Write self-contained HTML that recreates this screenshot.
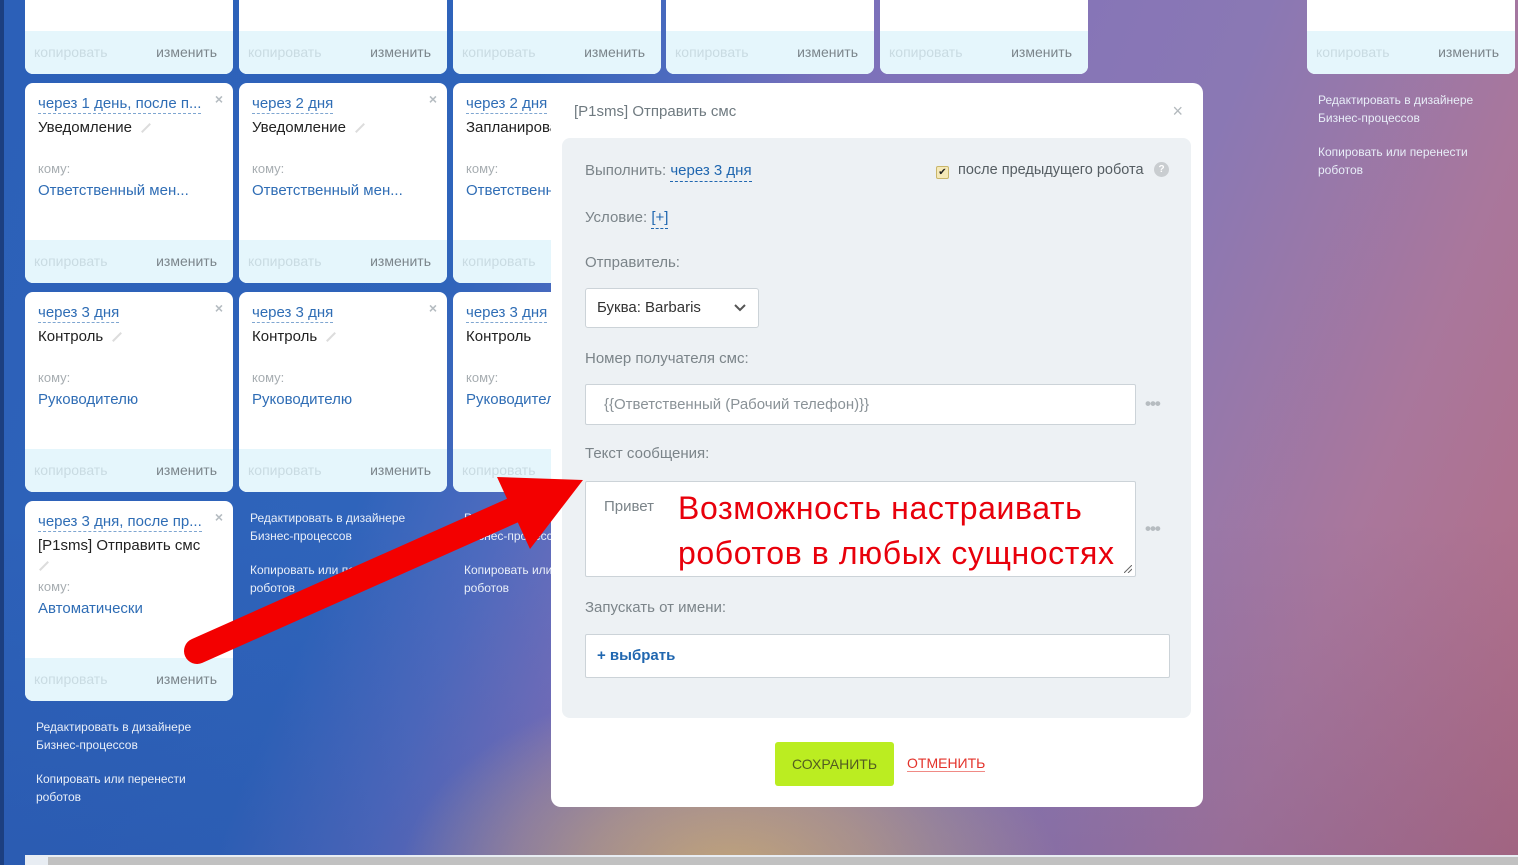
<!DOCTYPE html>
<html><head><meta charset="utf-8">
<style>
*{box-sizing:border-box;margin:0;padding:0}
body{width:1518px;height:865px;overflow:hidden;position:relative;font-family:"Liberation Sans",sans-serif;
background:
radial-gradient(ellipse 330px 200px at 730px 880px, rgba(218,182,120,1) 0%, rgba(218,182,120,0.6) 45%, rgba(218,182,120,0) 100%),
linear-gradient(112deg,#2c60b8 0%,#2f64bb 30%,#4f6bbf 38%,#7a70ba 46%,#8574b8 55%,#8a78b4 68%,#a9779c 84%,#b46c82 100%);}
.lay{position:absolute;inset:0;background:linear-gradient(180deg,rgba(0,0,0,0) 0%,rgba(0,0,0,0) 60%,rgba(20,40,120,0.12) 100%);}
.card{position:absolute;width:208px;background:#fff;border-radius:8px;overflow:hidden}
.card .ft{position:absolute;left:0;right:0;bottom:0;height:43px;background:#e5f6fc;font-size:14px}
.ft .c{position:absolute;left:9px;top:13px;color:#c9dbe2}
.ft .e{position:absolute;right:16px;top:13px;color:#7b858b}
.t{position:absolute;left:13px;top:12px;font-size:15px;color:#2f6db5;border-bottom:1px dashed #7fa6d1;line-height:18px;white-space:nowrap}
.x{position:absolute;right:10px;top:8px;color:#b5bcc1;font-size:14px;font-weight:bold}
.n{position:absolute;left:13px;top:36px;font-size:15px;color:#222;white-space:nowrap}
.n i{display:inline-block;width:12px;height:2px;background:#dcdcdc;transform:rotate(-45deg);margin-left:8px;vertical-align:middle}
.k{position:absolute;left:13px;top:78px;font-size:13px;color:#a7adb1}
.r{position:absolute;left:13px;top:99px;font-size:15px;color:#2f6db5;white-space:nowrap}
.lnk{position:absolute;font-size:12px;color:#e8eef8;line-height:18px}
.modal{position:absolute;left:551px;top:83px;width:652px;height:724px;background:#fff;border-radius:10px}
.panel{position:absolute;left:11px;top:55px;width:629px;height:580px;background:#edf1f4;border-radius:8px}
.lbl{position:absolute;font-family:"Liberation Sans Narrow","Liberation Sans",sans-serif;font-size:15px;color:#7b8489}
.inp{position:absolute;background:#fff;border:1px solid #ccd3d8;border-radius:2px}
.dots{position:absolute;color:#b6bcc0;font-size:14px;letter-spacing:-1px;font-weight:bold}
</style></head><body>
<div class="lay"></div>
<div style="position:absolute;left:0;top:0;width:4px;height:865px;background:#1c3f80"></div>

<div class="card" style="left:25px;top:-10px;height:84px"><div class="ft"><span class="c">копировать</span><span class="e">изменить</span></div></div>
<div class="card" style="left:239px;top:-10px;height:84px"><div class="ft"><span class="c">копировать</span><span class="e">изменить</span></div></div>
<div class="card" style="left:453px;top:-10px;height:84px"><div class="ft"><span class="c">копировать</span><span class="e">изменить</span></div></div>
<div class="card" style="left:666px;top:-10px;height:84px"><div class="ft"><span class="c">копировать</span><span class="e">изменить</span></div></div>
<div class="card" style="left:880px;top:-10px;height:84px"><div class="ft"><span class="c">копировать</span><span class="e">изменить</span></div></div>
<div class="card" style="left:1307px;top:-10px;height:84px"><div class="ft"><span class="c">копировать</span><span class="e">изменить</span></div></div>

<div class="card" style="left:25px;top:83px;height:200px"><span class="t">через 1 день, после п...</span><span class="x">×</span><span class="n">Уведомление<i></i></span><span class="k">кому:</span><span class="r">Ответственный мен...</span><div class="ft"><span class="c">копировать</span><span class="e">изменить</span></div></div>
<div class="card" style="left:239px;top:83px;height:200px"><span class="t">через 2 дня</span><span class="x">×</span><span class="n">Уведомление<i></i></span><span class="k">кому:</span><span class="r">Ответственный мен...</span><div class="ft"><span class="c">копировать</span><span class="e">изменить</span></div></div>
<div class="card" style="left:453px;top:83px;height:200px"><span class="t">через 2 дня</span><span class="n">Запланировать</span><span class="k">кому:</span><span class="r">Ответственный</span><div class="ft"><span class="c">копировать</span><span class="e">изменить</span></div></div>

<div class="card" style="left:25px;top:292px;height:200px"><span class="t">через 3 дня</span><span class="x">×</span><span class="n">Контроль<i></i></span><span class="k">кому:</span><span class="r">Руководителю</span><div class="ft"><span class="c">копировать</span><span class="e">изменить</span></div></div>
<div class="card" style="left:239px;top:292px;height:200px"><span class="t">через 3 дня</span><span class="x">×</span><span class="n">Контроль<i></i></span><span class="k">кому:</span><span class="r">Руководителю</span><div class="ft"><span class="c">копировать</span><span class="e">изменить</span></div></div>
<div class="card" style="left:453px;top:292px;height:200px"><span class="t">через 3 дня</span><span class="n">Контроль</span><span class="k">кому:</span><span class="r">Руководителю</span><div class="ft"><span class="c">копировать</span><span class="e">изменить</span></div></div>

<div class="card" style="left:25px;top:501px;height:200px"><span class="t">через 3 дня, после пр...</span><span class="x">×</span><span class="n">[P1sms] Отправить смс</span><span class="n" style="top:56px"><i style="margin-left:0"></i></span><span class="k">кому:</span><span class="r">Автоматически</span><div class="ft"><span class="c">копировать</span><span class="e">изменить</span></div></div>

<div class="lnk" style="left:36px;top:718px">Редактировать в дизайнере<br>Бизнес-процессов</div>
<div class="lnk" style="left:36px;top:770px">Копировать или перенести<br>роботов</div>
<div class="lnk" style="left:250px;top:509px">Редактировать в дизайнере<br>Бизнес-процессов</div>
<div class="lnk" style="left:250px;top:561px">Копировать или перенести<br>роботов</div>
<div class="lnk" style="left:464px;top:509px">Редактировать в дизайнере<br>Бизнес-процессов</div>
<div class="lnk" style="left:464px;top:561px">Копировать или перенести<br>роботов</div>
<div class="lnk" style="left:1318px;top:91px">Редактировать в дизайнере<br>Бизнес-процессов</div>
<div class="lnk" style="left:1318px;top:143px">Копировать или перенести<br>роботов</div>

<div class="modal">
  <div class="lbl" style="left:23px;top:20px;font-size:15px;color:#6f7a80">[P1sms] Отправить смс</div>
  <div style="position:absolute;right:20px;top:18px;color:#b3b9bd;font-size:18px">×</div>
  <div class="panel">
    <div class="lbl" style="left:23px;top:24px">Выполнить: <span style="color:#2067b0;border-bottom:1px dashed #2067b0;padding-bottom:2px">через 3 дня</span></div>
    <div style="position:absolute;left:374px;top:28px;width:13px;height:13px;background:#f5e9b8;border:1px solid #c9b66a;border-radius:2px;font-size:10px;line-height:11px;text-align:center;color:#222">✔</div>
    <div class="lbl" style="left:396px;top:24px;color:#555d62;font-family:'Liberation Sans',sans-serif;font-size:14.5px">после предыдущего робота</div>
    <div style="position:absolute;left:592px;top:24px;width:15px;height:15px;border-radius:50%;background:#c9cdd0;color:#fff;font-size:10px;text-align:center;line-height:15px;font-weight:bold">?</div>
    <div class="lbl" style="left:23px;top:71px">Условие: <span style="color:#2067b0;border-bottom:1px dashed #2067b0;padding-bottom:2px">[+]</span></div>
    <div class="lbl" style="left:23px;top:116px">Отправитель:</div>
    <div class="inp" style="left:23px;top:150px;width:174px;height:40px;border-radius:3px"><span class="lbl" style="left:11px;top:10px;color:#333">Буква: Barbaris</span>
      <svg style="position:absolute;right:12px;top:15px" width="12" height="8" viewBox="0 0 12 8"><path d="M1 1l5 5 5-5" fill="none" stroke="#555" stroke-width="2"/></svg></div>
    <div class="lbl" style="left:23px;top:212px">Номер получателя смс:</div>
    <div class="inp" style="left:23px;top:246px;width:551px;height:41px"><span class="lbl" style="left:18px;top:11px;color:#8a9297">{{Ответственный (Рабочий телефон)}}</span></div>
    <div class="dots" style="left:583px;top:256px;font-size:17px">•••</div>
    <div class="lbl" style="left:23px;top:307px">Текст сообщения:</div>
    <div class="inp" style="left:23px;top:343px;width:551px;height:96px"><span class="lbl" style="left:18px;top:16px;color:#7b8489">Привет</span>
      <div style="position:absolute;left:92px;top:4px;font-size:32px;line-height:45px;color:#e8000b;white-space:nowrap;letter-spacing:0.6px">Возможность настраивать<br>роботов в любых сущностях</div>
      <svg style="position:absolute;right:3px;bottom:3px" width="8" height="8"><path d="M0 8L8 0M4 8L8 4" stroke="#666" stroke-width="1"/></svg></div>
    <div class="dots" style="left:583px;top:381px;font-size:17px">•••</div>
    <div class="lbl" style="left:23px;top:461px">Запускать от имени:</div>
    <div class="inp" style="left:23px;top:496px;width:585px;height:44px"><span class="lbl" style="left:11px;top:12px;color:#2067b0;font-weight:bold">+ выбрать</span></div>
  </div>
  <div style="position:absolute;left:224px;top:659px;width:119px;height:44px;background:#bbed21;border-radius:3px;text-align:center;line-height:44px;font-family:'Liberation Sans Narrow','Liberation Sans',sans-serif;font-size:14px;color:#535c21">СОХРАНИТЬ</div>
  <div style="position:absolute;left:356px;top:672px;font-family:'Liberation Sans Narrow','Liberation Sans',sans-serif;font-size:14px;color:#e3322a;border-bottom:1px solid #f08a85;line-height:16px">ОТМЕНИТЬ</div>
</div>

<svg style="position:absolute;left:0;top:0" width="1518" height="865">
  <line x1="197" y1="651" x2="525" y2="505" stroke="#f30000" stroke-width="26" stroke-linecap="round"/>
  <polygon points="583,480 497,477 530,549" fill="#f30000"/>
</svg>

<div style="position:absolute;left:25px;top:855px;width:1493px;height:10px;background:#e8edf3"></div>
<div style="position:absolute;left:48px;top:857px;width:1470px;height:8px;background:#c1c1c1"></div>
</body></html>
